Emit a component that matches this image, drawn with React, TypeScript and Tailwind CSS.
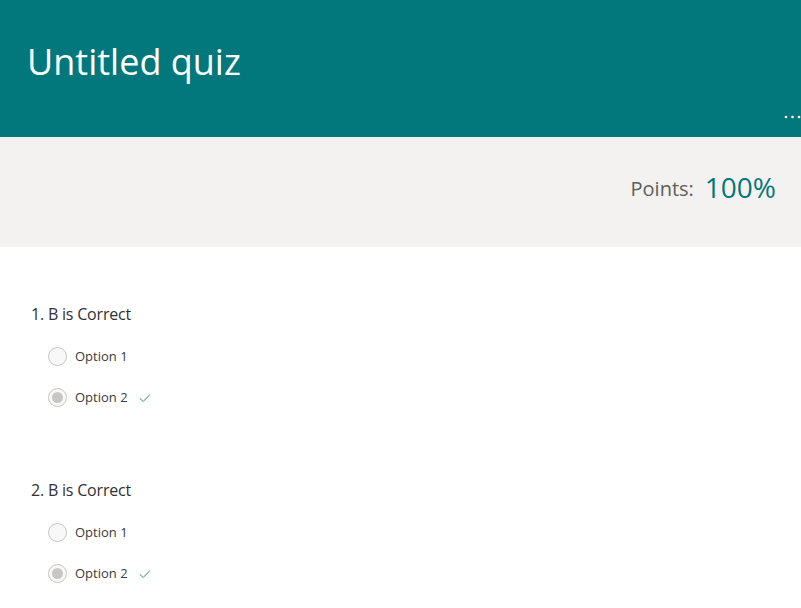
import React from 'react';

const questions = [
  { id: 1, title: 'B is Correct', options: ['Option 1', 'Option 2'], answer: 1 },
  { id: 2, title: 'B is Correct', options: ['Option 1', 'Option 2'], answer: 1 },
];

const Radio: React.FC<{ checked: boolean }> = ({ checked }) => (
  <span className="w-[19px] h-[19px] rounded-full border border-[#c8c6c4] bg-[#f8f8f8] flex items-center justify-center shrink-0">
    {checked && <span className="w-[11px] h-[11px] rounded-full bg-[#c8c6c4]" />}
  </span>
);

const App: React.FC = () => {
  return (
    <div className="h-screen bg-white font-['Open_Sans','Noto_Sans',sans-serif] overflow-hidden">
      {/* Header */}
      <div className="h-[137px] bg-[#03787c] relative">
        <h1 className="pl-[27px] pt-[36px] text-[36px] leading-[52px] text-white font-normal tracking-[0px]">Untitled quiz</h1>
        <svg className="absolute right-0 top-[115px]" width="18" height="4" viewBox="0 0 18 4" fill="#ffffff">
          <circle cx="3" cy="2" r="1.3" />
          <circle cx="9.5" cy="2" r="1.3" />
          <circle cx="16" cy="2" r="1.3" />
        </svg>
      </div>

      {/* Score band */}
      <div className="h-[110px] bg-[#f3f2f1] flex items-center justify-end pr-[25px] pb-[10px]">
        <span className="text-[20px] text-[#605e5c] mr-[11px] mt-[3px]">Points:</span>
        <span className="text-[28px] text-[#03787c]">100%</span>
      </div>

      {/* Questions */}
      <div className="pt-[53px] pl-[31px]">
        {questions.map((q) => (
          <div key={q.id} className="mb-[69px]">
            <p className="text-[16px] text-[#323130] leading-[28px] tracking-[-0.2px]">{q.id}. {q.title}</p>
            <div className="pl-[17px] mt-[19px] flex flex-col gap-[22px]">
              {q.options.map((opt, i) => (
                <div key={opt} className="flex items-center h-[19px]">
                  <Radio checked={i === q.answer} />
                  <span className="ml-[8px] text-[13px] text-[#3b3a39]">{opt}</span>
                  {i === q.answer && (
                    <svg className="ml-[11px]" width="12" height="10" viewBox="0 0 12 10" fill="none">
                      <path d="M1 5.5 L4.2 8.5 L11 1.5" stroke="#2b8a82" strokeWidth="1" />
                    </svg>
                  )}
                </div>
              ))}
            </div>
          </div>
        ))}
      </div>
    </div>
  );
};

export default App;
